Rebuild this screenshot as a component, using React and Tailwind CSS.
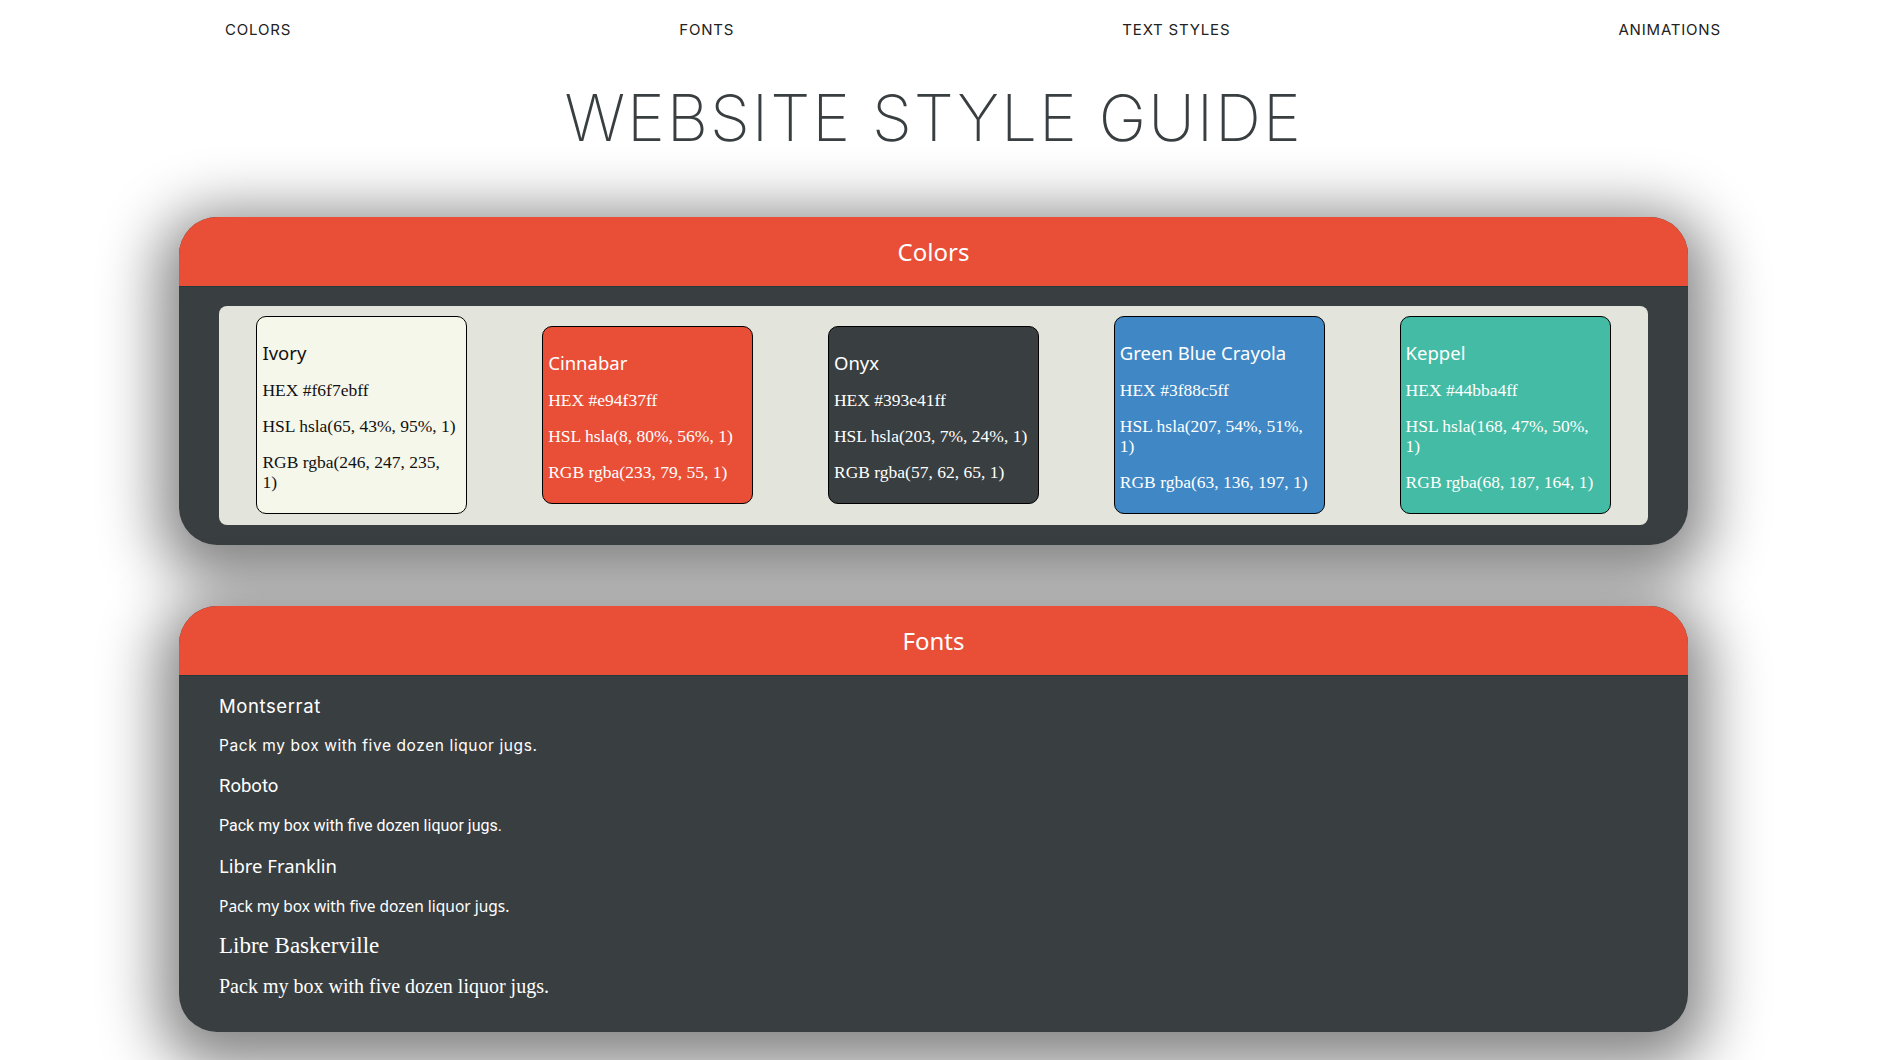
import React from "react";

const swatches = [
  { name: "Ivory", bg: "bg-[#f6f7eb]", text: "text-[#111]", hex: "#f6f7ebff", hsl: ["HSL hsla(65, 43%, 95%, 1)"], rgb: ["RGB rgba(246, 247, 235,", "1)"] },
  { name: "Cinnabar", bg: "bg-[#e94f37]", text: "text-white", hex: "#e94f37ff", hsl: ["HSL hsla(8, 80%, 56%, 1)"], rgb: ["RGB rgba(233, 79, 55, 1)"] },
  { name: "Onyx", bg: "bg-[#393e41]", text: "text-white", hex: "#393e41ff", hsl: ["HSL hsla(203, 7%, 24%, 1)"], rgb: ["RGB rgba(57, 62, 65, 1)"] },
  { name: "Green Blue Crayola", bg: "bg-[#3f88c5]", text: "text-white", hex: "#3f88c5ff", hsl: ["HSL hsla(207, 54%, 51%,", "1)"], rgb: ["RGB rgba(63, 136, 197, 1)"] },
  { name: "Keppel", bg: "bg-[#44bba4]", text: "text-white", hex: "#44bba4ff", hsl: ["HSL hsla(168, 47%, 50%,", "1)"], rgb: ["RGB rgba(68, 187, 164, 1)"] },
];

const serif = "font-['Liberation_Serif',serif]";
const franklin = "font-['Noto_Sans',sans-serif]";

function Lines({ lines }) {
  return (
    <p className={`mt-4 text-[17.5px] leading-5 whitespace-nowrap ${serif}`}>
      {lines.map((l, i) => (
        <React.Fragment key={i}>
          {i > 0 && <br />}
          {l}
        </React.Fragment>
      ))}
    </p>
  );
}

function Swatch({ s }) {
  return (
    <div className={`w-[211px] p-[5px] border border-black rounded-[10px] ${s.bg} ${s.text}`}>
      <div className={`mt-5 text-[18.5px] leading-[22px] whitespace-nowrap ${franklin}`}>{s.name}</div>
      <p className={`mt-4 text-[17.5px] leading-5 whitespace-nowrap ${serif}`}>HEX {s.hex}</p>
      <Lines lines={s.hsl} />
      <div className="mb-4">
        <Lines lines={s.rgb} />
      </div>
    </div>
  );
}

function Card({ title, children }) {
  return (
    <section className="w-[1509px] mx-auto rounded-[38px] overflow-hidden bg-[#393e41] shadow-[0_15px_60px_20px_rgba(0,0,0,0.48)]">
      <div className={`h-[70px] bg-[#e94f37] border-b border-[#24393d] flex items-center justify-center text-white text-[24px] ${franklin}`}>
        {title}
      </div>
      {children}
    </section>
  );
}

export default function App() {
  return (
    <div className="w-full min-h-screen bg-white overflow-hidden">
      <div className="w-[1867px]">
        <nav className="ml-[31px] w-[1884px] pt-[20px] flex justify-around font-['Inter',sans-serif] text-[15px] leading-5 text-[#222] tracking-[0.8px]">
          <span>COLORS</span>
          <span>FONTS</span>
          <span>TEXT STYLES</span>
          <span>ANIMATIONS</span>
        </nav>
        <h1 className="mt-[39px] text-center font-['Inter',sans-serif] font-extralight text-[64px] leading-[78px] text-[#393e41] tracking-[2px]">
          WEBSITE STYLE GUIDE
        </h1>

        <div className="mt-[60px]">
          <Card title="Colors">
            <div className="px-10 pt-[19px] pb-[20px]">
              <div className="bg-[#e3e4dc] rounded-lg pt-[10px] pb-[11px] flex justify-around items-center">
                {swatches.map((s) => (
                  <Swatch key={s.name} s={s} />
                ))}
              </div>
            </div>
          </Card>
        </div>

        <div className="mt-[61px] pb-[40px]">
          <Card title="Fonts">
            <div className="px-10 pt-[18px] pb-[34px] flex flex-col gap-4 text-white">
              <div className="leading-6 text-[18.5px] font-['Inter',sans-serif] tracking-[0.6px]">Montserrat</div>
              <div className="leading-6 text-[15.5px] font-['Inter',sans-serif] tracking-[0.6px]">Pack my box with five dozen liquor jugs.</div>
              <div className="leading-6 text-[18.5px] font-['Roboto',sans-serif]">Roboto</div>
              <div className="leading-6 text-[16px] font-['Roboto',sans-serif]">Pack my box with five dozen liquor jugs.</div>
              <div className={`leading-6 text-[18.5px] ${franklin}`}>Libre Franklin</div>
              <div className={`leading-6 text-[15.5px] ${franklin}`}>Pack my box with five dozen liquor jugs.</div>
              <div className={`leading-6 text-[23px] ${serif}`}>Libre Baskerville</div>
              <div className={`leading-6 text-[20px] ${serif}`}>Pack my box with five dozen liquor jugs.</div>
            </div>
          </Card>
        </div>
      </div>
    </div>
  );
}
